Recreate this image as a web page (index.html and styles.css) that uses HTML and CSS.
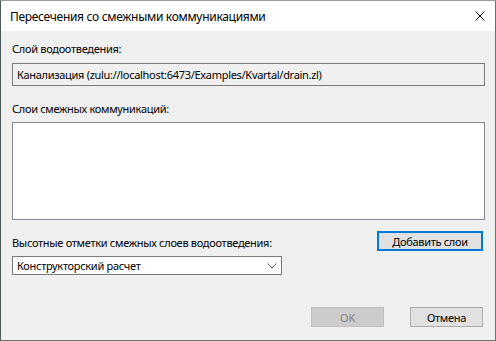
FILE: index.html
```html
<!DOCTYPE html>
<html lang="ru">
<head>
<meta charset="utf-8">
<title>Пересечения со смежными коммуникациями</title>
<link rel="stylesheet" href="styles.css">
</head>
<body>
<div class="window">
  <div class="titlebar">
    <span class="title">Пересечения со смежными коммуникациями</span>
    <span class="close">
      <svg width="10" height="10" viewBox="0 0 10 10"><path d="M0.5 0.5 L9.5 9.5 M9.5 0.5 L0.5 9.5" stroke="#000" stroke-width="1" fill="none"/></svg>
    </span>
  </div>
  <div class="content">
    <div class="label first">Слой водоотведения:</div>
    <div class="readonly">Канализация (zulu://localhost:6473/Examples/Kvartal/drain.zl)</div>
    <div class="label second">Слои смежных коммуникаций:</div>
    <div class="listbox"></div>
    <div class="row">
      <div class="col">
        <div class="label third">Высотные отметки смежных слоев водоотведения:</div>
        <div class="combo">
          <span>Конструкторский расчет</span>
          <svg class="chev" width="10" height="6" viewBox="0 0 10 6"><path d="M0.5 0.5 L5 5 L9.5 0.5" stroke="#606060" stroke-width="1" fill="none"/></svg>
        </div>
      </div>
      <button class="btn add">Добавить слои</button>
    </div>
    <div class="footer">
      <button class="btn disabled">OK</button>
      <button class="btn">Отмена</button>
    </div>
  </div>
</div>
</body>
</html>
```
FILE: styles.css
```css
html, body {
  margin: 0;
  padding: 0;
  width: 496px;
  height: 341px;
  overflow: hidden;
  background: #f0f0f0;
}
body {
  font-family: "Noto Sans", "Segoe UI", sans-serif;
  font-size: 11px;
  letter-spacing: -0.3px;
  color: #000;
}
.window {
  box-sizing: border-box;
  width: 496px;
  height: 341px;
  border: 1px solid #6e6e6e;
  border-top-color: #9a9a9a;
  border-left-color: #4f5a5a;
  display: flex;
  flex-direction: column;
  background: #f0f0f0;
}
.titlebar {
  height: 30px;
  background: #fff;
  display: flex;
  align-items: center;
  justify-content: space-between;
  padding: 0 10px 0 9px;
  flex-shrink: 0;
}
.title {
  font-size: 12px;
  color: #000;
}
.close {
  display: flex;
  width: 10px;
  height: 10px;
  margin-top: -1px;
}
.content {
  flex: 1;
  padding: 0 10px 0 11px;
  display: flex;
  flex-direction: column;
}
.label {
  line-height: 16px;
  height: 16px;
  white-space: nowrap;
}
.first { margin-top: 10px; }
.readonly {
  margin-top: 6px;
  height: 23px;
  box-sizing: border-box;
  border: 1px solid #7a7a7a;
  background: #f0f0f0;
  padding: 0 4px;
  line-height: 21px;
  white-space: nowrap;
}
.second { margin-top: 15px; }
.listbox {
  margin-top: 5px;
  height: 98px;
  box-sizing: border-box;
  border: 1px solid #828790;
  background: #fff;
}
.row {
  display: flex;
  align-items: flex-start;
  justify-content: space-between;
  margin-top: 11px;
}
.col { display: flex; flex-direction: column; }
.third { margin-top: 4px; }
.combo {
  margin-top: 5px;
  width: 270px;
  height: 19px;
  box-sizing: border-box;
  border: 1px solid #7a7a7a;
  background: #fff;
  display: flex;
  align-items: center;
  justify-content: space-between;
  padding: 0 4px 0 4px;
}
.chev { margin-top: 1px; }
.btn {
  font-family: inherit;
  font-size: 11px;
  letter-spacing: -0.3px;
  color: #000;
  background: #e1e1e1;
  border: 1px solid #adadad;
  box-sizing: border-box;
  height: 20px;
  padding: 0;
  margin: 0 2px 0 0;
  width: 73px;
}
.add {
  width: 106px;
  border: 2px solid #0078d7;
}
.footer {
  margin-top: auto;
  margin-bottom: 13px;
  display: flex;
  justify-content: flex-end;
  gap: 24px;
}
.disabled {
  background: #cccccc;
  border-color: #bfbfbf;
  color: #838383;
}
```
